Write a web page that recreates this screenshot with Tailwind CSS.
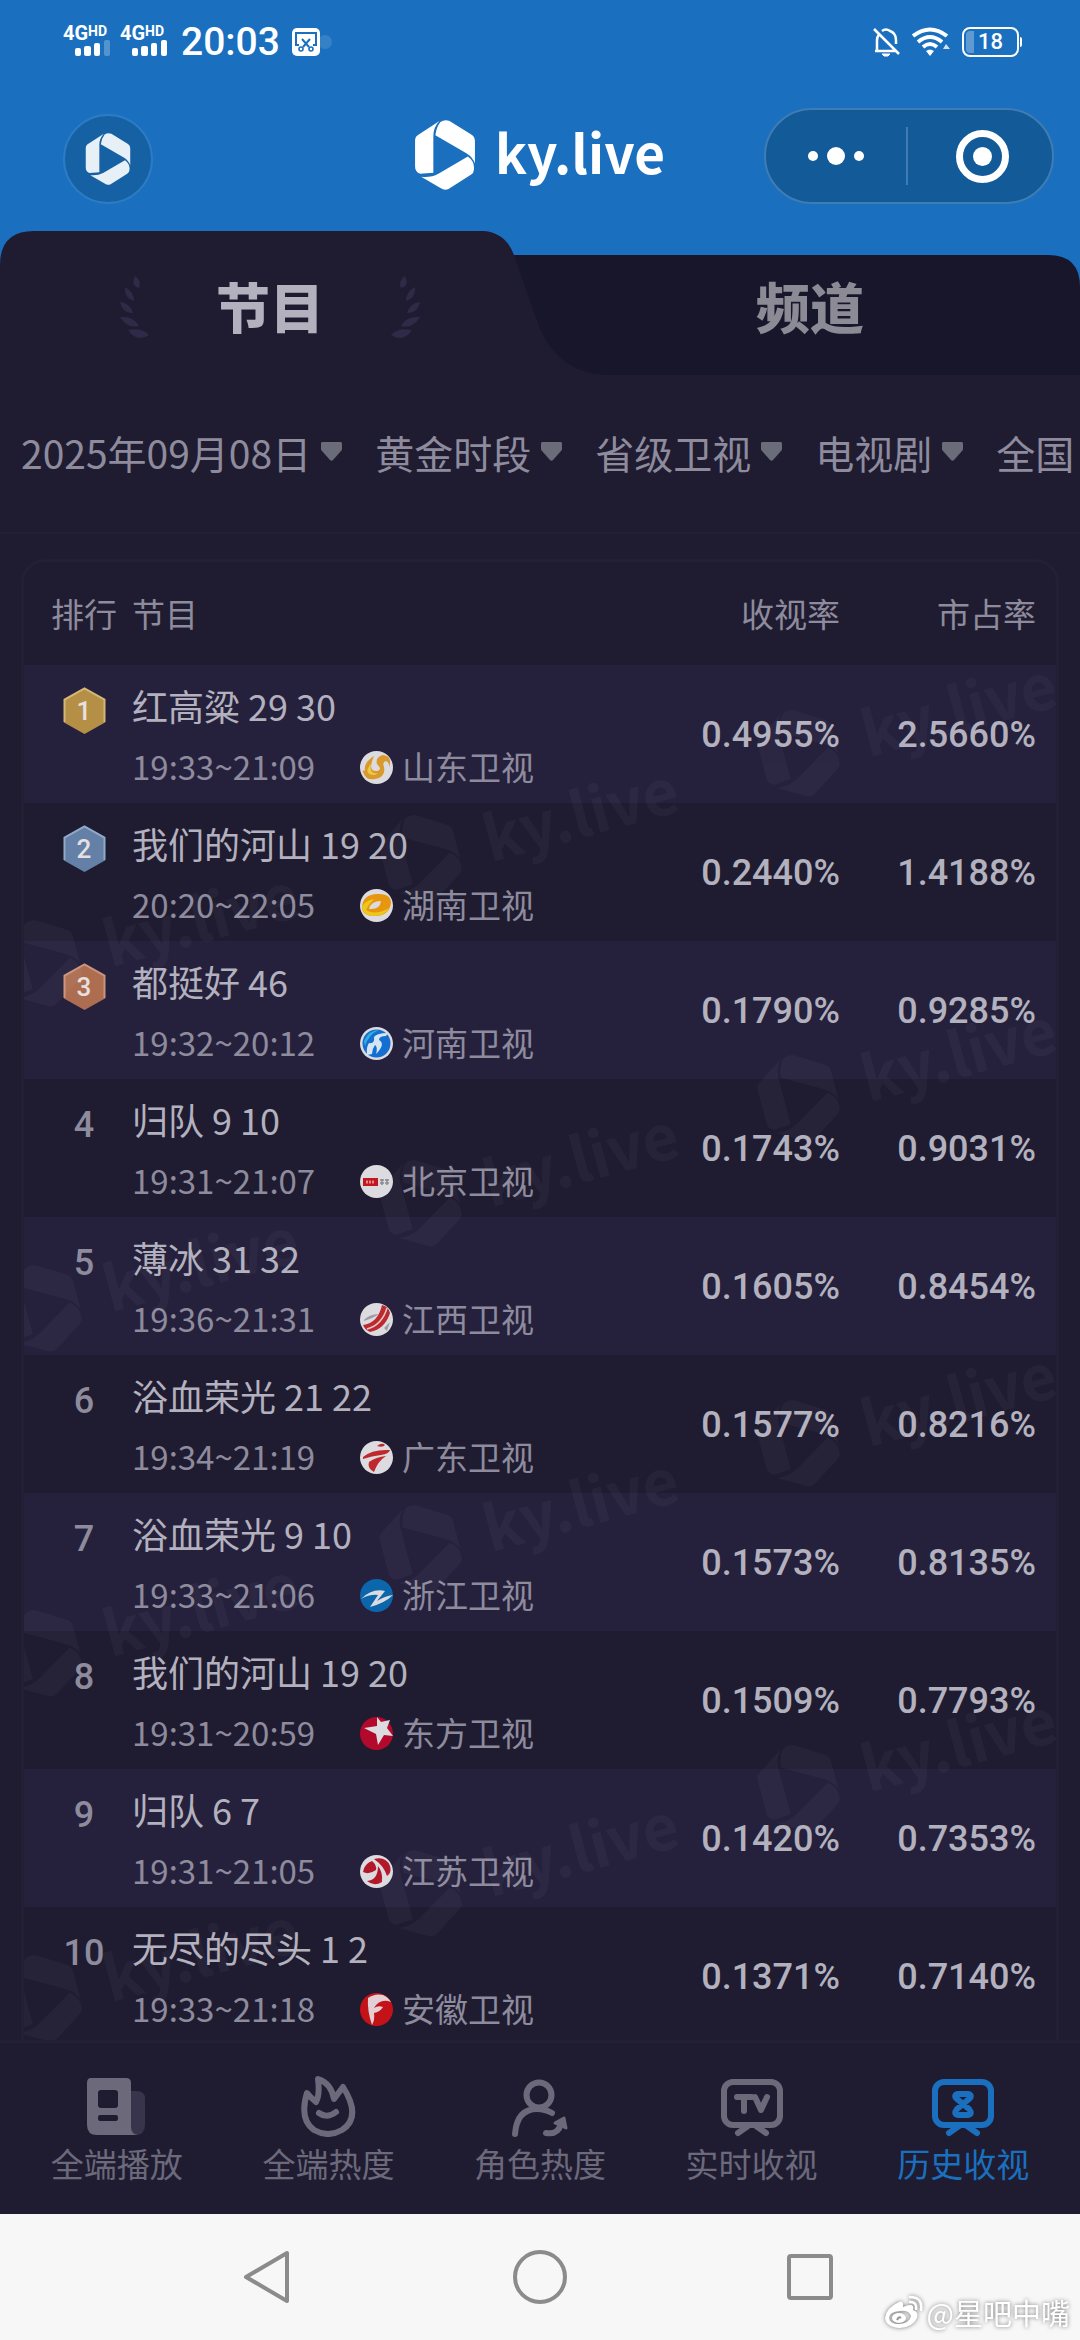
<!DOCTYPE html>
<html lang="zh-CN">
<head>
<meta charset="utf-8">
<meta name="viewport" content="width=device-width, initial-scale=1">
<title>ky.live 历史收视</title>
<script src="https://cdn.jsdelivr.net/npm/@tailwindcss/browser@4"></script>
</head>
<body class="flex h-screen flex-col overflow-hidden bg-[#1f1c31] font-['Noto_Sans_CJK_SC',sans-serif] text-[#8e8b9d]">

<!-- shared symbols -->
<svg class="hidden" aria-hidden="true">
  <symbol id="logo" viewBox="0 0 59 69">
    <path d="M0 20Q0 16 4 14L24 1Q18 7 18 16V52L5 53Q0 51 0 46Z"/>
    <path d="M25 2Q29 -1 34 1L55 14Q59 16 59 21V43Q57 37 51 33L20 15Q21 7 25 2Z"/>
    <path d="M52 36Q59 41 58 49Q58 52 55 54L33 68Q29 70 25 67L6 56Q16 57 23 53Z"/>
  </symbol>
</svg>

<header class="shrink-0 bg-[#1a70bf] text-white">
  <div class="flex h-[84px] items-center justify-between pr-[58px] pl-[63px]">
    <div class="flex items-center gap-2.5">
      <svg class="h-8 w-[47px] overflow-visible font-[Roboto,sans-serif]" viewBox="0 0 47 32" fill="currentColor" aria-label="4G HD">
        <text x="0" y="14" font-size="20" font-weight="700">4G</text><text x="25" y="10" font-size="14" font-weight="700">HD</text>
        <rect x="12" y="22" width="6" height="8" rx="2"/><rect x="21" y="20" width="7" height="10" rx="2"/><rect x="31" y="17" width="6" height="13" rx="2"/><rect x="41" y="14" width="6" height="16" rx="2" opacity=".25"/>
      </svg>
      <svg class="h-8 w-[47px] overflow-visible font-[Roboto,sans-serif]" viewBox="0 0 47 32" fill="currentColor" aria-label="4G HD">
        <text x="0" y="14" font-size="20" font-weight="700">4G</text><text x="25" y="10" font-size="14" font-weight="700">HD</text>
        <rect x="12" y="22" width="6" height="8" rx="2"/><rect x="21" y="20" width="7" height="10" rx="2"/><rect x="31" y="17" width="6" height="13" rx="2"/><rect x="41" y="14" width="6" height="16" rx="2"/>
      </svg>
      <span class="ml-1 font-[Roboto,sans-serif] text-[39px] leading-10 font-medium">20:03</span>
      <svg class="ml-0.5 h-7 w-10" viewBox="0 0 40 28" fill="none" aria-hidden="true">
        <circle cx="33" cy="14" r="7" fill="#fff" opacity=".12"/>
        <rect width="28" height="28" rx="5" fill="#fff"/>
        <path d="M7 17H4V5H24V17H21M10 11L17 19M18 11L11 19" stroke="#1a70bf" stroke-width="2"/>
        <circle cx="9" cy="21" r="2" stroke="#1a70bf" stroke-width="1.6"/><circle cx="19" cy="21" r="2" stroke="#1a70bf" stroke-width="1.6"/>
      </svg>
    </div>
    <div class="flex items-center gap-3">
      <svg class="h-[30px] w-[27px]" viewBox="0 0 27 30" fill="none" stroke="#fff" stroke-width="2.5" aria-hidden="true">
        <path d="M1 2L26 27M2 24H23M4 24V13Q4 9 7 7M9 4Q13 1 17 4Q23 6 23 13V17"/><path d="M9 27H17L15 29H11Z" fill="#fff" stroke-width="1"/>
      </svg>
      <svg class="h-[30px] w-[38px]" viewBox="0 0 38 30" fill="none" stroke="#fff" stroke-width="4" aria-hidden="true">
        <path d="M1 9Q18 -4 35 9M6 15Q18 5 30 15M11 20Q18 14 25 20"/><path d="M14 24Q18 21 22 24L18 29Z" fill="#fff" stroke="none"/><path d="M31 22L34 17L38 22Z" fill="#fff" stroke="none" opacity=".8"/>
      </svg>
      <div class="flex items-center gap-px">
        <div class="flex h-[30px] w-[57px] items-center rounded-lg border-2 border-white p-0.5">
          <span class="h-full w-2 rounded-l-sm bg-white/30"></span>
          <span class="ml-1 font-[Roboto,sans-serif] text-[22px] leading-6 font-medium">18</span>
        </div>
        <span class="h-2.5 w-0.5 rounded-r bg-white"></span>
      </div>
    </div>
  </div>

  <div class="relative flex h-[147px] items-start justify-between pt-6 pr-[26px] pl-[63px]">
    <button class="mt-1.5 flex size-[90px] items-center justify-center rounded-full border-2 border-[#2c7cc5] bg-[#1661a4]" aria-label="首页">
      <svg class="h-[52px] w-[46px] fill-[#e8f0f7]" aria-hidden="true"><use href="#logo"/></svg>
    </button>
    <h1 class="pointer-events-none absolute inset-x-0 top-9 flex items-center justify-center gap-5">
      <svg class="h-[70px] w-[60px] fill-white" aria-hidden="true"><use href="#logo"/></svg>
      <span class="pb-2 text-[53px] leading-[62px] font-bold">ky.live</span>
    </h1>
    <div class="flex h-24 w-[290px] items-center rounded-full border-2 border-[#3f7cb3] bg-[#135a98]">
      <button class="flex h-full flex-1 items-center justify-center gap-[9px]" aria-label="更多">
        <span class="size-2.5 rounded-full bg-white"></span><span class="size-[18px] rounded-full bg-white"></span><span class="size-2.5 rounded-full bg-white"></span>
      </button>
      <span class="h-[58px] w-0.5 bg-[#3f7cb3]"></span>
      <button class="flex h-full flex-1 items-center justify-center pl-1" aria-label="关闭">
        <span class="flex size-[53px] items-center justify-center rounded-full border-[7px] border-white"><span class="size-[19px] rounded-full bg-white"></span></span>
      </button>
    </div>
  </div>
</header>

<div class="relative grid h-36 shrink-0 grid-cols-2 bg-[#1a70bf] pt-2.5 text-[54px] font-black" role="tablist">
  <svg class="absolute inset-0 h-full w-full" viewBox="0 0 1080 144" preserveAspectRatio="none" aria-hidden="true">
    <path d="M480 24H1048Q1080 24 1080 56V144H480Z" fill="#18162a"/>
    <path d="M0 144V34Q0 0 34 0H484Q506 2 514 24L537 90Q556 142 606 144Z" fill="#1f1c31"/>
  </svg>
  <button class="relative flex items-center justify-center gap-[66px] text-[#b3b1bd]" role="tab" aria-selected="true">
    <svg class="h-16 w-[30px] fill-[#2e2a48]" viewBox="0 0 30 64" aria-hidden="true"><path id="laurel" d="M15 0Q22 5 19 12Q10 9 15 0ZM5 11Q14 16 14 25Q4 22 5 11ZM0 26Q10 27 13 37Q3 38 0 26ZM0 41Q14 40 19 50Q7 53 0 41ZM8 54Q22 51 29 59Q17 67 8 54Z"/></svg>
    <span class="pb-1.5">节目</span>
    <svg class="h-16 w-[30px] -scale-x-100 fill-[#2e2a48]" viewBox="0 0 30 64" aria-hidden="true"><use href="#laurel"/></svg>
  </button>
  <button class="relative flex items-center justify-center text-[#8b8a95]" role="tab" aria-selected="false"><span class="pb-1.5">频道</span></button>
</div>

<nav class="flex h-[159px] shrink-0 items-center gap-[33px] overflow-hidden border-b-2 border-[#232036] pb-1 pl-[21px] text-[39px]" id="filters" aria-label="筛选"></nav>

<main class="min-h-0 flex-1 overflow-hidden px-[21px] pt-[25px]">
  <div class="relative overflow-hidden rounded-t-[24px] border-[3px] border-[#232036]">
    <table class="w-full table-fixed border-collapse">
      <thead>
        <tr class="h-[103px] text-[33px]">
          <th class="w-[108px] pl-3 text-center font-normal">排行</th>
          <th class="text-left font-normal">节目</th>
          <th class="w-[200px] text-right font-normal">收视率</th>
          <th class="w-[216px] pr-5 text-right font-normal">市占率</th>
        </tr>
      </thead>
      <tbody id="rows"></tbody>
    </table>
    <svg class="pointer-events-none absolute inset-0 h-full w-full fill-white opacity-[0.03]" aria-hidden="true" id="marks"></svg>
  </div>
</main>

<nav class="grid h-[174px] shrink-0 grid-cols-5 border-t-[3px] border-[#232036] px-[11px] pt-8 text-[33px] leading-9 text-[#6c697b]" aria-label="主导航">
  <a href="#play" class="flex flex-col items-center gap-2">
    <svg class="h-[62px] w-16" viewBox="0 0 64 62" aria-hidden="true"><path d="M40 16H52Q60 16 60 24V50Q60 60 50 60H40Z" fill="#38344c"/><path fill="currentColor" fill-rule="evenodd" d="M6 3H41Q46 3 46 8V52Q46 59 53 60H12Q2 60 2 50V8Q2 3 6 3ZM16 15Q13 15 13 18V30Q13 33 16 33H30Q33 33 33 30V18Q33 15 30 15ZM15 40Q13 40 13 43Q13 46 15 46H31Q33 46 33 43Q33 40 31 40Z"/></svg>
    全端播放
  </a>
  <a href="#heat" class="flex flex-col items-center gap-2">
    <svg class="h-[62px] w-16" viewBox="0 0 64 62" fill="none" stroke="currentColor" stroke-width="6" stroke-linecap="round" stroke-linejoin="round" aria-hidden="true"><path d="M20 27Q24 20 22 4Q35 8 38 24L47 12Q66 42 46 55Q32 63 18 55Q3 44 11 18Q14 22 20 27ZM23 38Q31 44 40 37"/></svg>
    全端热度
  </a>
  <a href="#role" class="flex flex-col items-center gap-2">
    <svg class="h-[62px] w-16 overflow-visible" viewBox="0 0 64 62" fill="none" stroke="currentColor" stroke-width="6" stroke-linecap="round" stroke-linejoin="round" aria-hidden="true"><circle cx="31" cy="20" r="12.500"/><path d="M7 59Q9 34 29 34Q37 34 44 38M38 58Q50 60 53 49"/><path d="M47 48L56 43L58 53Z" fill="currentColor" stroke-width="3"/></svg>
    角色热度
  </a>
  <a href="#live" class="flex flex-col items-center gap-2">
    <svg class="h-[62px] w-16" viewBox="0 0 64 62" fill="none" stroke="currentColor" stroke-width="6" stroke-linecap="round" stroke-linejoin="round" aria-hidden="true"><rect x="4" y="7" width="56" height="43" rx="9"/><path d="M18 58L28 51M36 51L46 58M17 22H32M24 23V36M35 22L41 35L47 22"/></svg>
    实时收视
  </a>
  <a href="#history" class="flex flex-col items-center gap-2 text-[#1a70bf]" aria-current="page">
    <svg class="h-[62px] w-16" viewBox="0 0 64 62" fill="none" stroke="currentColor" stroke-width="6" stroke-linecap="round" stroke-linejoin="round" aria-hidden="true"><rect x="4" y="7" width="56" height="43" rx="9"/><path d="M18 58L28 51M36 51L46 58"/><path d="M27 19H37Q42 20 38 24L26 34Q22 39 27 40H37Q42 39 38 34L26 24Q22 20 27 19Z"/></svg>
    历史收视
  </a>
</nav>

<footer class="relative flex h-[126px] shrink-0 items-center justify-center gap-[216px] bg-[#f7f7f7] text-[#8b8b8b]">
  <button aria-label="返回"><svg class="size-[54px]" viewBox="0 0 54 54" fill="none" stroke="currentColor" stroke-width="4" stroke-linejoin="round"><path d="M44 3V51L3 27Z"/></svg></button>
  <button aria-label="主屏幕"><svg class="size-[54px]" viewBox="0 0 54 54" fill="none" stroke="currentColor" stroke-width="4"><circle cx="27" cy="27" r="25"/></svg></button>
  <button aria-label="最近任务"><svg class="size-[54px]" viewBox="0 0 54 54" fill="none" stroke="currentColor" stroke-width="4"><rect x="6" y="6" width="42" height="42" rx="2"/></svg></button>
  <div class="absolute right-2.5 bottom-2.5 flex items-center gap-1 text-[29px] leading-9 text-white [filter:drop-shadow(0_0_2px_#777)]">
    <svg class="h-8 w-[38px]" viewBox="0 0 38 32" aria-hidden="true"><path fill="#fff" fill-rule="evenodd" d="M14 6Q19 4 18 11Q30 6 28 14Q34 16 32 22Q28 31 15 32Q1 31 0 22Q1 12 14 6ZM15 15Q4 16 4 22Q5 28 14 28Q25 27 26 20Q24 14 15 15Z"/><ellipse cx="14" cy="22" rx="7" ry="5" fill="#fff"/><path d="M12 24Q14 20 16 22" stroke="#999" stroke-width="2" fill="none"/><path d="M25 6Q32 6 31 13M25 1Q38 1 36 14" fill="none" stroke="#fff" stroke-width="2.5" stroke-linecap="round"/></svg>
    <span>@星吧中嘴</span>
  </div>
</footer>

<script>
const filters = [['日期', '2025年09月08日'], ['时段', '黄金时段'], ['频道组', '省级卫视'], ['类型', '电视剧'], ['地区', '全国']];
document.getElementById('filters').innerHTML = filters.map(([label, value]) => `
  <label class="flex shrink-0 items-center gap-2.5">
    <select class="field-sizing-content cursor-pointer appearance-none bg-transparent p-0 leading-[56px]" aria-label="${label}"><option>${value}</option></select>
    <svg class="h-[19px] w-[21px] shrink-0 fill-[#6b6c7a]" viewBox="0 0 21 19" aria-hidden="true"><path d="M1 0H20Q21 0 21 2V7Q21 8 20 9L12 18Q10.500 19.500 9 18L1 9Q0 8 0 7V2Q0 0 1 0Z"/></svg>
  </label>`).join('');

// 33 x 33 station marks
const white = '<circle cx="16.500" cy="16.500" r="16.500" fill="#dcdbe0"/>';
const icons = {
  山东: white + '<path d="M14 5Q3 12 5 20Q2 18 3 21Q6 30 15 28Q26 26 24 16Q22 11 26 10Q30 12 29 17Q33 5 23 4Q15 6 17 13Q23 19 17 20Q7 21 14 5Z" fill="#d99a2b"/><path d="M11 13Q9 24 18 22Q14 26 8 22Q6 18 11 13Z" fill="#ebc94a"/>',
  湖南: white + '<path fill="#e8960f" fill-rule="evenodd" d="M16 5Q31 4 31 14Q29 27 15 27Q2 27 2 18Q3 6 16 5ZM21 12Q11 12 9 20Q20 21 21 12Z"/><path d="M2 18Q3 27 15 27Q26 26 29 19Q15 27 6 21Q8 16 14 10Q4 12 2 18Z" fill="#ecc81b"/>',
  河南: white + '<circle cx="16.500" cy="16.500" r="14" fill="#146fd0"/><path d="M4 14Q9 3 19 3Q9 7 5 19Z" fill="#31aee0"/><path d="M7 28Q6 20 9 16Q15 17 14 10Q17 6 28 6L26 9Q19 9 19 13Q26 17 16 27Q18 20 15 18Q12 22 12 27Z" fill="#d4e6f3"/>',
  北京: white + '<rect x="3" y="13" width="15" height="8" fill="#c2171f"/><path d="M6 17H15" stroke="#e08a8d" stroke-width="3" stroke-dasharray="2 1"/><path d="M20 15H24M20 18H24M22 14V20M25 15H29M25 18H29M27 14V20" stroke="#8d8a8f" stroke-width="1.500"/>',
  江西: white + '<path d="M3 22Q18 20 22 2Q28 3 30 10Q25 26 10 29Q5 27 3 22Z" fill="#bd2a2e"/><path d="M7 26Q22 22 27 5" stroke="#e8c8ca" stroke-width="1.500" fill="none"/><path d="M3 18Q12 16 19 11Q9 11 3 18ZM24 25L30 19L27 28Z" fill="#9f9ba4"/>',
  广东: white + '<path d="M3 16Q12 8 30 9Q29 13 21 14Q12 15 3 18ZM26 15Q18 20 14 31Q7 27 9 21Q16 16 26 15ZM17 5Q22 1 25 4Q23 7 17 5Z" fill="#c0282e"/>',
  浙江: '<circle cx="16.500" cy="16.500" r="16.500" fill="#0b66ac"/><path d="M1 20Q12 9 25 12L17 22Q25 17 33 16Q25 24 10 28L18 16Q10 15 1 20Z" fill="#dcdbe0"/>',
  东方: '<circle cx="16.500" cy="16.500" r="16.500" fill="#b30a2c"/><path d="M17 0L21 5L30 3L27 11L33 19L24 18L18 28L16 17L4 11L17 9Z" fill="#dcdbe0"/>',
  江苏: white + '<path d="M14 4Q26 1 30 11Q32 18 27 21Q24 11 14 4ZM12 6Q17 10 16 15Q9 20 3 17Q4 9 12 6ZM18 11Q23 17 22 27Q14 32 7 26Q18 25 18 11Z" fill="#b3172a"/>',
  安徽: '<circle cx="16.500" cy="16.500" r="16.500" fill="#c41318"/><path d="M12 32Q7 17 8 5Q15 0 23 2Q28 4 31 9Q20 5 14 15Q18 12 23 14Q20 19 14 20Q15 27 12 32Z" fill="#e4cfd5"/>'
};
const medals = [['#b58f45', '#d3b777'], ['#6580a6', '#91a9c8'], ['#ad6d50', '#cb937b']];
const data = [
  ['红高粱 29 30', '19:33~21:09', '山东', '0.4955%', '2.5660%'],
  ['我们的河山 19 20', '20:20~22:05', '湖南', '0.2440%', '1.4188%'],
  ['都挺好 46', '19:32~20:12', '河南', '0.1790%', '0.9285%'],
  ['归队 9 10', '19:31~21:07', '北京', '0.1743%', '0.9031%'],
  ['薄冰 31 32', '19:36~21:31', '江西', '0.1605%', '0.8454%'],
  ['浴血荣光 21 22', '19:34~21:19', '广东', '0.1577%', '0.8216%'],
  ['浴血荣光 9 10', '19:33~21:06', '浙江', '0.1573%', '0.8135%'],
  ['我们的河山 19 20', '19:31~20:59', '东方', '0.1509%', '0.7793%'],
  ['归队 6 7', '19:31~21:05', '江苏', '0.1420%', '0.7353%'],
  ['无尽的尽头 1 2', '19:33~21:18', '安徽', '0.1371%', '0.7140%']
];
document.getElementById('rows').innerHTML = data.map(([name, time, tv, rate, share], i) => `
  <tr class="h-[138px] odd:bg-[#25213d]">
    <td class="pt-4 pl-3 align-top">
      <div class="flex h-[60px] items-center justify-center font-[Roboto,sans-serif] font-medium">
        ${i < 3 ? `<span class="relative flex h-12 w-[43px] items-center justify-center text-[26px] leading-8 text-[#e6e1e0]"><svg class="absolute inset-0" viewBox="0 0 43 48" aria-hidden="true"><path d="M21.500 1L42 12.500V35.500L21.500 47L1 35.500V12.500Z" fill="${medals[i][0]}"/><path d="M1.500 35V12.700L21.500 1.500L41.500 12.700V35" fill="none" stroke="${medals[i][1]}" stroke-width="2"/></svg><span class="relative">${i + 1}</span></span>` : `<span class="text-[36px] leading-[60px]">${i + 1}</span>`}
      </div>
    </td>
    <td class="pt-2.5 align-top whitespace-nowrap">
      <div class="text-[36px] leading-[60px] text-[#b3b1be]">${name}</div>
      <div class="flex items-center pt-px text-[33px] leading-[60px]">
        <span class="w-[228px]">${time}</span>
        <svg class="mt-0.5 mr-[9px] size-[33px]" viewBox="0 0 33 33" aria-hidden="true">${icons[tv]}</svg>
        <span>${tv}卫视</span>
      </div>
    </td>
    <td class="pt-0.5 text-right font-[Roboto,sans-serif] text-[36px] font-medium text-[#b3b1be]">${rate}</td>
    <td class="pt-0.5 pr-5 text-right font-[Roboto,sans-serif] text-[36px] font-medium text-[#b3b1be]">${share}</td>
  </tr>`).join('');

// staggered diagonal brand marks, repeated every 345px
const marks = [];
for (const [x, y] of [[17, 401], [397, 296], [775, 191]])
  for (let n = 0; n < 4; n++)
    marks.push(`<g transform="translate(${x} ${y + n * 345}) rotate(-15) translate(-38 -44)"><svg width="76" height="89" viewBox="0 0 59 69"><use href="#logo"/></svg><text x="104" y="66" font-size="62" font-weight="700">ky.live</text></g>`);
document.getElementById('marks').innerHTML = marks.join('');
</script>
</body>
</html>
